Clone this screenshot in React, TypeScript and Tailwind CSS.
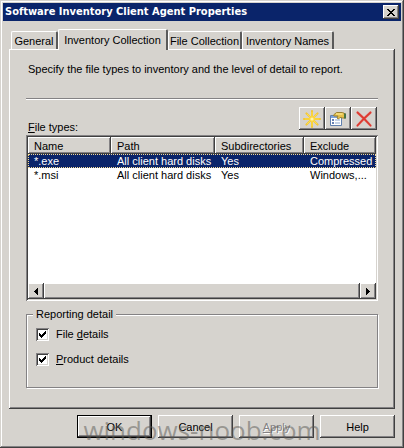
import { useState } from 'react';
import clsx from 'clsx';

type FileType = {
  name: string;
  path: string;
  subdirectories: string;
  exclude: string;
};

const tabs = [
  { label: 'General', width: 'w-[47px]' },
  { label: 'Inventory Collection', width: 'w-[110px]' },
  { label: 'File Collection', width: 'w-[74px]' },
  { label: 'Inventory Names', width: 'w-[92px]' },
];

const fileTypes: FileType[] = [
  { name: '*.exe', path: 'All client hard disks', subdirectories: 'Yes', exclude: 'Compressed' },
  { name: '*.msi', path: 'All client hard disks', subdirectories: 'Yes', exclude: 'Windows,...' },
];

const raised = 'bg-[#d6d3ce] shadow-[inset_-1px_-1px_#404040,inset_1px_1px_#fff,inset_-2px_-2px_#848284]';
const sunken =
  'bg-white shadow-[inset_1px_1px_#848284,inset_-1px_-1px_#fff,inset_2px_2px_#404040,inset_-2px_-2px_#d6d3ce]';

function NewIcon() {
  return (
    <svg width="18" height="18" viewBox="0 0 18 18" fill="none" strokeLinecap="round">
      <path d="M9 1v16M1 9h16M3.4 3.4l11.2 11.2M14.6 3.4L3.4 14.6" stroke="#f3c52c" strokeWidth="2" />
      <path d="M9 2v14M2 9h14M4 4l10 10M14 4L4 14" stroke="#ffe14d" strokeWidth="1" />
      <circle cx="9" cy="9" r="3" fill="#fbd544" />
      <circle cx="9" cy="9" r="1.6" fill="#fff6a8" />
    </svg>
  );
}

function PropertiesIcon() {
  return (
    <svg width="18" height="18" viewBox="0 0 18 18" fill="none">
      <path d="M1.5 5.5h11v10h-11z" fill="#fff" stroke="#5f7fae" />
      <path d="M2 6h10v2H2z" fill="#7ea3dc" />
      <path d="M3 10h2M3 13h2" stroke="#35579a" strokeWidth="1.5" />
      <path d="M6 10h5M6 13h5" stroke="#8aa6cf" />
      <path d="M4.5 5L7.5 2.5h6l3 1.500v4h-3L11 7.500 9.500 9 8 8l1-2H5z" fill="#e6c04a" stroke="#9a8030" />
      <path d="M7 4h6.5" stroke="#fff0a0" />
      <path d="M15 3.5h2v5h-2z" fill="#477343" />
    </svg>
  );
}

function DeleteIcon() {
  return (
    <svg width="18" height="18" viewBox="0 0 18 18" fill="none" strokeLinecap="round">
      <path d="M2.5 2.5c4 3.5 8.5 8 13 13M15.5 2.5c-4.5 4-9 8.5-13 13" stroke="#e9908a" strokeWidth="2.6" />
      <path d="M2.5 2.5c4 3.5 8.5 8 13 13M15.5 2.5c-4.5 4-9 8.5-13 13" stroke="#dc3a30" strokeWidth="1.7" />
    </svg>
  );
}

function TitleBar() {
  return (
    <div className="flex h-[18px] items-center justify-between bg-[#0a246a] px-[2px]">
      <h1 className="font-['DejaVu_Sans_Condensed','DejaVu_Sans',sans-serif] text-[11px] leading-4 font-bold whitespace-nowrap text-white">
        Software Inventory Client Agent Properties
      </h1>
      <button aria-label="Close" className={clsx('flex h-[14px] w-4 items-center justify-center', raised)}>
        <svg width="8" height="7" viewBox="0 0 8 7" shapeRendering="crispEdges">
          <path
            d="M0 0h2v1H0zM6 0h2v1H6zM1 1h2v1H1zM5 1h2v1H5zM2 2h4v1H2zM3 3h2v1H3zM2 4h4v1H2zM1 5h2v1H1zM5 5h2v1H5zM0 6h2v1H0zM6 6h2v1H6z"
            fill="#000"
          />
        </svg>
      </button>
    </div>
  );
}

function FileTypesTable() {
  const [selected, setSelected] = useState(0);

  return (
    <div className={clsx('flex h-[166px] flex-col p-[2px]', sunken)}>
      <table aria-labelledby="file-types" className="w-full table-fixed border-collapse text-left">
        <colgroup>
          <col className="w-[83px]" />
          <col className="w-[104px]" />
          <col className="w-[89px]" />
          <col />
        </colgroup>
        <thead>
          <tr className="h-[17px]">
            {['Name', 'Path', 'Subdirectories', 'Exclude'].map((heading) => (
              <th key={heading} className={clsx('p-0 pl-[6px] leading-[14px] font-normal', raised)}>
                {heading}
              </th>
            ))}
          </tr>
        </thead>
        <tbody>
          {fileTypes.map((row, i) => (
            <tr
              key={row.name}
              onClick={() => setSelected(i)}
              className={clsx(
                'h-[14px] leading-[14px] whitespace-nowrap',
                i === selected && 'bg-[#0a246a] text-white outline-1 -outline-offset-1 outline-dotted outline-[#f5db95]'
              )}
            >
              <td className="p-0 pl-[6px]">{row.name}</td>
              <td className="p-0 pl-[6px]">{row.path}</td>
              <td className="p-0 pl-[6px]">{row.subdirectories}</td>
              <td className="p-0 pl-[6px]">{row.exclude}</td>
            </tr>
          ))}
        </tbody>
      </table>
      <div className="mt-auto flex h-4">
        <button aria-label="Scroll left" className={clsx('flex w-4 items-center justify-center', raised)}>
          <svg width="4" height="7" viewBox="0 0 4 7" shapeRendering="crispEdges">
            <path d="M3 0h1v7H3zM2 1h1v5H2zM1 2h1v3H1zM0 3h1v1H0z" />
          </svg>
        </button>
        <div className={clsx('flex-1', raised)} />
        <button aria-label="Scroll right" className={clsx('flex w-4 items-center justify-center', raised)}>
          <svg width="4" height="7" viewBox="0 0 4 7" shapeRendering="crispEdges">
            <path d="M0 0h1v7H0zM1 1h1v5H1zM2 2h1v3H2zM3 3h1v1H3z" />
          </svg>
        </button>
      </div>
    </div>
  );
}

type CheckFieldProps = {
  id: string;
  children: React.ReactNode;
};

function CheckField({ id, children }: CheckFieldProps) {
  return (
    <div className="flex h-4 items-center gap-[7px]">
      <span className="relative h-[13px] w-[13px]">
        <input id={id} type="checkbox" defaultChecked className={clsx('peer block h-full w-full appearance-none', sunken)} />
        <svg
          className="pointer-events-none absolute top-[3px] left-[3px] hidden peer-checked:block"
          width="7"
          height="7"
          viewBox="0 0 7 7"
          shapeRendering="crispEdges"
        >
          <path d="M0 2h1v3H0zM1 3h1v3H1zM2 4h1v3H2zM3 3h1v3H3zM4 2h1v3H4zM5 1h1v3H5zM6 0h1v3H6z" />
        </svg>
      </span>
      <label htmlFor={id}>{children}</label>
    </div>
  );
}

export default function App() {
  const [activeTab, setActiveTab] = useState('Inventory Collection');

  return (
    <main
      className="relative min-h-screen bg-[#d6d3ce] p-[3px] font-['Liberation_Sans',Arial,sans-serif]
        text-[11px] leading-4 text-black
        shadow-[inset_-1px_-1px_#404040,inset_1px_1px_#d6d3ce,inset_-2px_-2px_#848284,inset_2px_2px_#fff]"
    >
      <TitleBar />
      <div className="px-[6px] pt-2 pb-[7px]">
        <div role="tablist" className="flex h-5 items-end pl-[2px]">
          {tabs.map((tab) => (
            <button
              key={tab.label}
              role="tab"
              aria-selected={tab.label === activeTab}
              onClick={() => setActiveTab(tab.label)}
              className={clsx(
                'rounded-t-[2px] border-t border-r-2 border-l border-t-white border-r-[#5a5a5a] border-l-white whitespace-nowrap',
                tab.width,
                tab.label === activeTab ? 'z-10 -mb-px h-[21px] bg-[#d6d3ce]' : 'h-[18px]'
              )}
            >
              {tab.label}
            </button>
          ))}
        </div>
        <section
          className="px-[17px] pt-3 pb-[21px]
            shadow-[inset_-1px_-1px_#404040,inset_1px_1px_#fff,inset_-2px_-2px_#848284]"
        >
          <p className="pl-[2px] whitespace-nowrap">
            Specify the file types to inventory and the level of detail to report.
          </p>
          <hr className="mt-[21px] border-t border-b border-t-[#848284] border-b-white" />
          <div className="mt-[7px] flex h-7 justify-between pr-px pl-[2px]">
            <span id="file-types" className="self-end">
              <u>F</u>ile types:
            </span>
            <div className="flex h-[23px]">
              <button aria-label="New" className={clsx('flex w-[26px] items-center justify-center', raised)}>
                <NewIcon />
              </button>
              <button aria-label="Properties" className={clsx('flex w-[26px] items-center justify-center', raised)}>
                <PropertiesIcon />
              </button>
              <button aria-label="Delete" className={clsx('flex w-[26px] items-center justify-center', raised)}>
                <DeleteIcon />
              </button>
            </div>
          </div>
          <FileTypesTable />
          <fieldset
            className="mt-[5px] border border-[#848284] px-[9px] pt-1 pb-5
              shadow-[1px_1px_#fff,inset_1px_1px_#fff]"
          >
            <legend className="-ml-[3px] bg-[#d6d3ce] px-[3px]">Reporting detail</legend>
            <div className="flex flex-col gap-[9px]">
              <CheckField id="file-details">
                File <u>d</u>etails
              </CheckField>
              <CheckField id="product-details">
                <u>P</u>roduct details
              </CheckField>
            </div>
          </fieldset>
        </section>
        <div className="mt-[6px] flex h-[23px] justify-end gap-[6px]">
          <button className={clsx('w-[75px] border border-black', raised)}>OK</button>
          <button className={clsx('w-[75px]', raised)}>Cancel</button>
          <button disabled className={clsx('w-[75px] text-[#848284] text-shadow-[1px_1px_#fff]', raised)}>
            <u>A</u>pply
          </button>
          <button className={clsx('w-[75px]', raised)}>Help</button>
        </div>
      </div>
      <div
        className="pointer-events-none absolute right-0 bottom-0 left-0 text-center font-['Open_Sans',sans-serif]
          text-[26px] leading-9 text-[#5a5955]/50"
      >
        windows-noob.com
      </div>
    </main>
  );
}
